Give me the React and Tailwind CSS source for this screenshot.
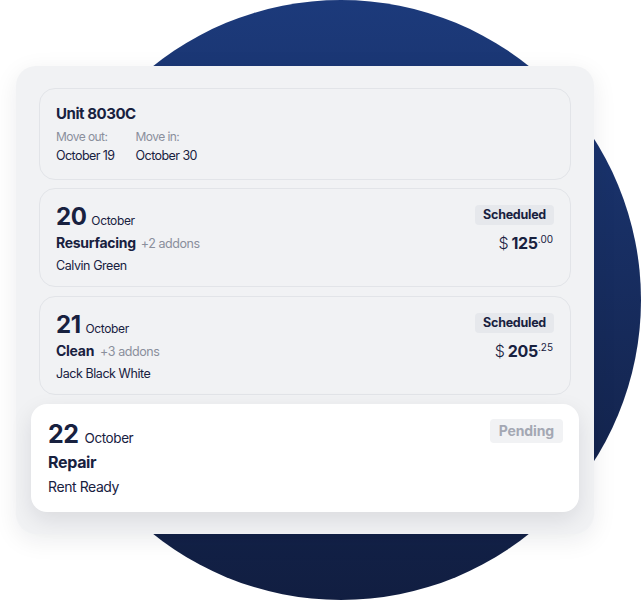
export default function App() {
  return (
    <div className="relative w-[642px] h-[600px] overflow-hidden bg-white font-['Inter','Liberation_Sans',sans-serif] text-[#18213f]">
      <div className="absolute left-[41px] top-0 w-[600px] h-[600px] rounded-full bg-gradient-to-b from-[#1c3a7b] to-[#111e41]" />
      <div className="relative ml-[16px] mt-[66px] w-[578px] h-[468px] rounded-[20px] bg-[#f1f2f4] shadow-[0_6px_24px_rgba(15,23,42,0.08)] px-[23px] pt-[22px] pb-[22px] flex flex-col">
        {/* Unit card */}
        <div className="h-[92px] rounded-[16px] border border-[#e2e4e8] px-[16px] pt-[15px]">
          <div className="text-[15px] leading-[20px] font-bold tracking-[-0.03em]">Unit 8030C</div>
          <div className="mt-[5px] flex gap-[21px] tracking-[-0.035em]">
            <div>
              <div className="text-[12px] leading-[16px] text-[#8a8f9c]">Move out:</div>
              <div className="mt-[2px] text-[12.5px] leading-[18px]">October 19</div>
            </div>
            <div>
              <div className="text-[12px] leading-[16px] text-[#8a8f9c]">Move in:</div>
              <div className="mt-[2px] text-[12.5px] leading-[18px]">October 30</div>
            </div>
          </div>
        </div>

        {/* 20 October */}
        <div className="mt-[8px] h-[99px] rounded-[16px] border border-[#e2e4e8] pl-[16px] pr-[16px] pt-[13px] flex justify-between">
          <div>
            <div className="flex items-baseline gap-[5px]">
              <span className="text-[24px] leading-[30px] font-bold tracking-[-0.02em]">20</span>
              <span className="text-[12px] tracking-[-0.03em]">October</span>
            </div>
            <div className="mt-[1px] flex items-baseline gap-[5px]">
              <span className="text-[14px] leading-[20px] font-bold tracking-[-0.02em]">Resurfacing</span>
              <span className="text-[12.5px] text-[#8a8f9c] tracking-[-0.035em]">+2 addons</span>
            </div>
            <div className="mt-[3px] text-[12.5px] leading-[18px] tracking-[-0.035em]">Calvin Green</div>
          </div>
          <div className="flex flex-col items-end pt-[3px]">
            <div className="h-[20px] px-[8px] rounded-[4px] bg-[#e6e8ec] text-[12.5px] font-bold leading-[20px] tracking-[-0.02em]">Scheduled</div>
            <div className="mt-[7px] flex items-start pr-[1px]">
              <span className="text-[16px] leading-[22px] mr-[3px] font-light">$</span>
              <span className="text-[16px] leading-[22px] font-bold tracking-[-0.02em]">125</span>
              <span className="text-[10px] leading-[14px]">.00</span>
            </div>
          </div>
        </div>

        {/* 21 October */}
        <div className="mt-[9px] h-[99px] rounded-[16px] border border-[#e2e4e8] pl-[16px] pr-[16px] pt-[13px] flex justify-between">
          <div>
            <div className="flex items-baseline gap-[5px]">
              <span className="text-[24px] leading-[30px] font-bold tracking-[-0.02em]">21</span>
              <span className="text-[12px] tracking-[-0.03em]">October</span>
            </div>
            <div className="mt-[1px] flex items-baseline gap-[6px]">
              <span className="text-[14px] leading-[20px] font-bold tracking-[-0.02em]">Clean</span>
              <span className="text-[12.5px] text-[#8a8f9c] tracking-[-0.035em]">+3 addons</span>
            </div>
            <div className="mt-[3px] text-[12.5px] leading-[18px] tracking-[-0.035em]">Jack Black White</div>
          </div>
          <div className="flex flex-col items-end pt-[3px]">
            <div className="h-[20px] px-[8px] rounded-[4px] bg-[#e6e8ec] text-[12.5px] font-bold leading-[20px] tracking-[-0.02em]">Scheduled</div>
            <div className="mt-[7px] flex items-start pr-[1px]">
              <span className="text-[16px] leading-[22px] mr-[3px] font-light">$</span>
              <span className="text-[16px] leading-[22px] font-bold tracking-[-0.02em]">205</span>
              <span className="text-[10px] leading-[14px]">.25</span>
            </div>
          </div>
        </div>

        {/* 22 October - elevated */}
        <div className="mt-[9px] -mx-[8px] h-[108px] rounded-[16px] bg-white shadow-[0_8px_22px_rgba(15,23,42,0.10)] pl-[17px] pr-[16px] pt-[15px] flex justify-between">
          <div>
            <div className="flex items-baseline gap-[6px]">
              <span className="text-[25px] leading-[30px] font-bold tracking-[-0.02em]">22</span>
              <span className="text-[13.5px] tracking-[-0.03em]">October</span>
            </div>
            <div className="mt-[2px] text-[16px] leading-[22px] font-bold tracking-[-0.02em]">Repair</div>
            <div className="mt-[4px] text-[14px] leading-[20px] tracking-[-0.03em]">Rent Ready</div>
          </div>
          <div>
            <div className="h-[24px] px-[9px] rounded-[4px] bg-[#f1f2f4] text-[14px] font-bold leading-[24px] text-[#a4a8b3] tracking-[-0.01em]">Pending</div>
          </div>
        </div>
      </div>
    </div>
  );
}
